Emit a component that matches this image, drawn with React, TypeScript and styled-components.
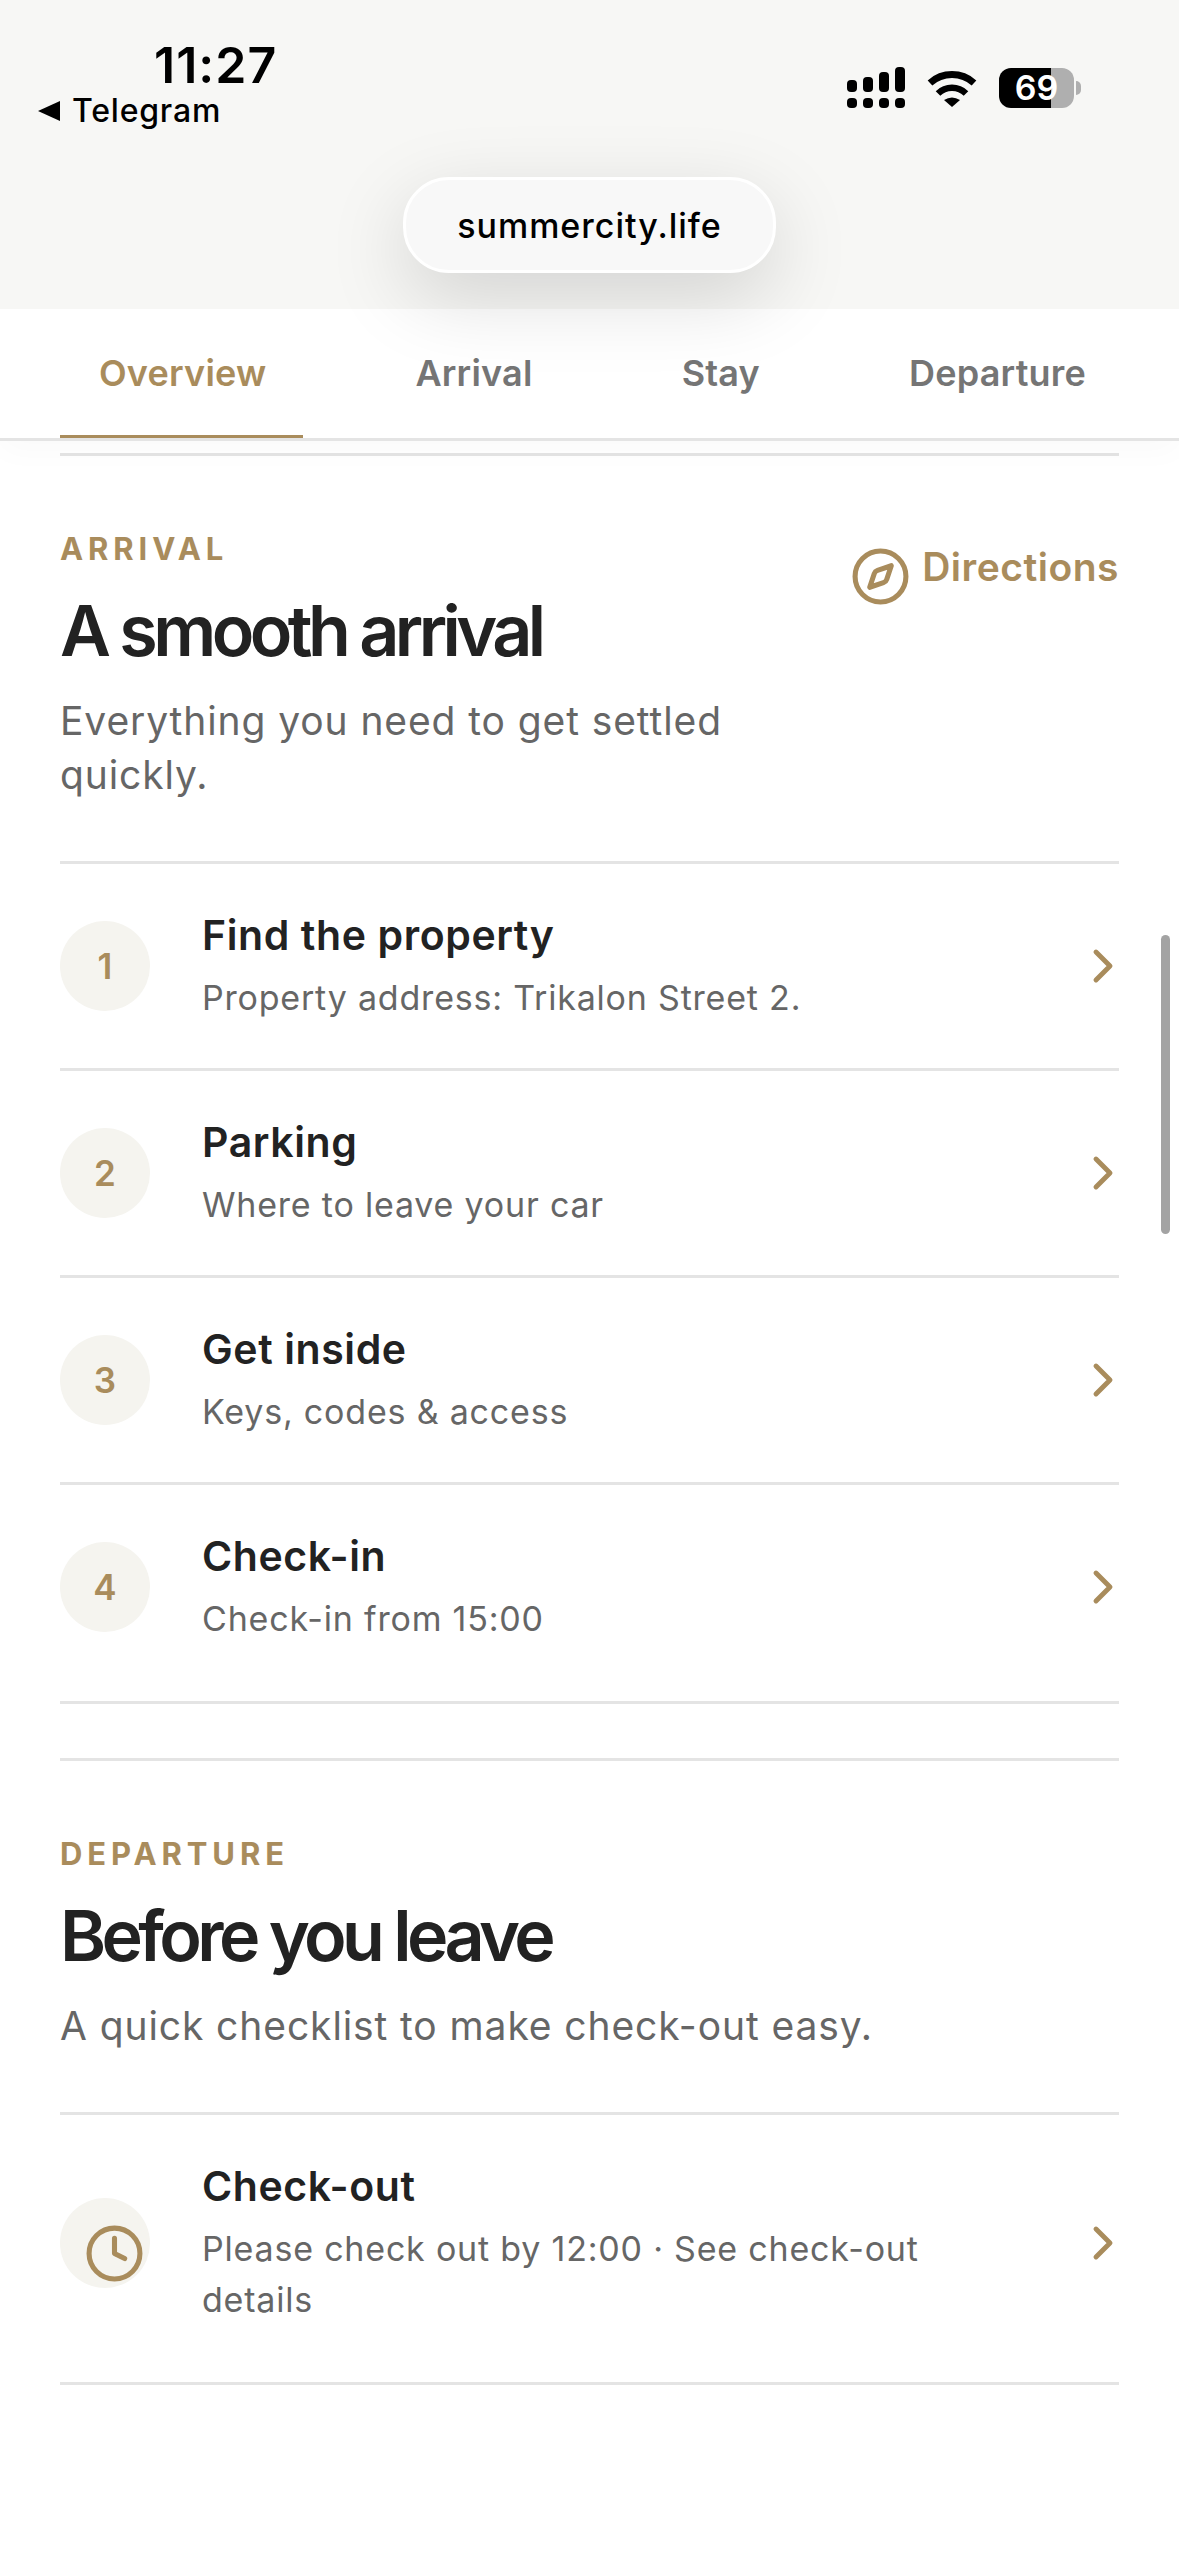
import { ChevronRight, Clock, Compass } from "lucide-react";
import styled, { createGlobalStyle } from "styled-components";

const GOLD = "#a98c5c";
const LINE = "#e4e4e4";

const GlobalStyle = createGlobalStyle`
  html, body {
    margin: 0;
    padding: 0;
    background: #ffffff;
  }
  * {
    box-sizing: border-box;
  }
`;

const Page = styled.div`
  position: relative;
  width: 1179px;
  height: 2556px;
  overflow: hidden;
  background: #ffffff;
  font-family: Inter, "Liberation Sans", sans-serif;
`;

const BrowserChrome = styled.header`
  position: relative;
  z-index: 2;
  height: 309px;
  padding-top: 36px;
  display: flex;
  flex-direction: column;
  align-items: center;
  background: #f7f7f5;
`;

const StatusBar = styled.div`
  width: 100%;
  height: 91px;
  padding: 0 105px 0 38px;
  display: flex;
  justify-content: space-between;
  color: #000000;
`;

const StatusLeft = styled.div`
  display: flex;
  flex-direction: column;
`;

const Time = styled.div`
  margin-left: 116px;
  font-size: 50px;
  line-height: 58px;
  font-weight: 600;
  letter-spacing: 1px;
`;

const BackLink = styled.div`
  margin-top: -2px;
  display: flex;
  align-items: center;
  gap: 12px;
  font-size: 32px;
  line-height: 38px;
  font-weight: 500;
  letter-spacing: 0.8px;
`;

const StatusIcons = styled.div`
  height: 41px;
  margin-top: 31px;
  display: flex;
  align-items: center;
  gap: 22px;
`;

const Battery = styled.div`
  position: relative;
  width: 75px;
  height: 40px;
  border-radius: 12px;
  display: flex;
  align-items: center;
  justify-content: center;
  background: linear-gradient(90deg, #000000 52px, #afafaf 52px);
  color: #ffffff;
  font-size: 34px;
  font-weight: 600;

  &::after {
    content: "";
    position: absolute;
    right: -7px;
    top: 13px;
    width: 5px;
    height: 14px;
    border-radius: 0 6px 6px 0;
    background: #afafaf;
  }
`;

const AddressPill = styled.div`
  margin-top: 50px;
  width: 373px;
  height: 96px;
  display: flex;
  align-items: center;
  justify-content: center;
  border: 3px solid #ffffff;
  border-radius: 46px;
  background: #f8f8f8;
  box-shadow: 0 24px 80px rgba(0, 0, 0, 0.15);
  color: #000000;
  font-size: 34px;
  font-weight: 500;
  letter-spacing: 1px;
`;

const TabBar = styled.nav`
  position: relative;
  z-index: 1;
  display: flex;
  gap: 73px;
  padding-left: 60px;
  background: #ffffff;
  border-bottom: 3px solid ${LINE};
  box-shadow: 0 10px 30px rgba(0, 0, 0, 0.025);
`;

const Tab = styled.div<{ $active?: boolean }>`
  padding: 42px 37px 40px 39px;
  font-size: 36px;
  line-height: 44px;
  font-weight: 600;
  letter-spacing: 0.2px;
  white-space: nowrap;
  color: ${(props) => (props.$active ? GOLD : "#757575")};
  border-bottom: 3px solid ${(props) => (props.$active ? GOLD : "transparent")};
  border-radius: 3px 3px 0 0;
`;

const Content = styled.main`
  padding: 12px 60px 0;
`;

const Section = styled.section`
  padding-top: 75px;
  border-top: 3px solid ${LINE};
  margin-bottom: 54px;
`;

const SectionHead = styled.div`
  display: flex;
  justify-content: space-between;
  align-items: flex-start;
  gap: 24px;
`;

const HeadText = styled.div`
  flex: 1;
`;

const Eyebrow = styled.div`
  font-size: 31px;
  line-height: 36px;
  font-weight: 700;
  letter-spacing: 4.9px;
  color: ${GOLD};
`;

const Heading = styled.h2`
  margin: 24px 0 23px;
  font-size: 70px;
  line-height: 80px;
  font-weight: 600;
  letter-spacing: -4.6px;
  color: #222222;
`;

const Lead = styled.p`
  margin: 0;
  font-size: 39px;
  line-height: 54px;
  font-weight: 400;
  letter-spacing: 0.9px;
  color: #666666;
`;

const DirectionsLink = styled.div`
  margin-top: 11px;
  display: flex;
  align-items: flex-start;
  gap: 11px;
  font-size: 39px;
  line-height: 50px;
  font-weight: 600;
  letter-spacing: 0.5px;
  color: ${GOLD};

  svg {
    margin-top: 4px;
  }
`;

const StepList = styled.div`
  margin-top: 59px;
  padding-bottom: 12px;
  border-top: 3px solid ${LINE};
  border-bottom: 3px solid ${LINE};
`;

const StepRow = styled.div`
  display: flex;
  align-items: center;
  padding: 45.5px 0;
  border-bottom: 3px solid ${LINE};

  &:last-child {
    border-bottom: none;
  }
`;

const Badge = styled.div`
  position: relative;
  flex: none;
  width: 90px;
  height: 90px;
  border-radius: 50%;
  display: flex;
  align-items: center;
  justify-content: center;
  background: #f5f4ef;
  color: ${GOLD};
  font-size: 35px;
  font-weight: 600;
`;

const BadgeIcon = styled.span`
  position: absolute;
  left: 24px;
  top: 25px;
  display: block;
  width: 61px;
  height: 61px;
`;

const StepText = styled.div`
  flex: 1;
  margin-left: 52px;
  padding-right: 120px;
`;

const StepTitle = styled.div`
  font-size: 41px;
  line-height: 50px;
  font-weight: 600;
  letter-spacing: 0.6px;
  color: #222222;
`;

const StepNote = styled.div`
  margin-top: 12px;
  font-size: 34px;
  line-height: 51px;
  letter-spacing: 0.8px;
  color: #666666;
`;

const ArrowSlot = styled.div`
  flex: none;
  width: 32px;
  display: flex;
  justify-content: center;
  color: ${GOLD};

  svg {
    flex: none;
    margin: 0 -12px;
  }
`;

const Scrollbar = styled.div`
  position: absolute;
  z-index: 3;
  left: 1161px;
  top: 935px;
  width: 9px;
  height: 299px;
  border-radius: 5px;
  background: #a3a3a3;
`;

const signalBars = [13, 10, 5, 0];

function SignalIcon() {
  return (
    <svg width="58" height="41" viewBox="0 0 58 41" fill="#000">
      {signalBars.map((top, i) => (
        <g key={top}>
          <rect x={i * 16} y={top} width="10" height={25 - top} rx="4" />
          <rect x={i * 16} y="31" width="10" height="10" rx="4" />
        </g>
      ))}
    </svg>
  );
}

function WifiIcon() {
  return (
    <svg width="50" height="38" viewBox="0 0 50 38">
      <path d="M3 14A33 33 0 0 1 47 14" fill="none" stroke="#000" strokeWidth="7" />
      <path d="M11 24.5A20 20 0 0 1 39 24.5" fill="none" stroke="#000" strokeWidth="6.5" />
      <path d="M17 31Q25 26 33 31L25 38Z" fill="#000" />
    </svg>
  );
}

function BackArrow() {
  return (
    <svg width="22" height="20" viewBox="0 0 22 20">
      <path d="M22 0V20L0 10Z" fill="#000" />
    </svg>
  );
}

const arrivalSteps = [
  { id: 1, title: "Find the property", note: "Property address: Trikalon Street 2." },
  { id: 2, title: "Parking", note: "Where to leave your car" },
  { id: 3, title: "Get inside", note: "Keys, codes & access" },
  { id: 4, title: "Check-in", note: "Check-in from 15:00" },
];

export default function App() {
  return (
    <Page>
      <GlobalStyle />
      <BrowserChrome>
        <StatusBar>
          <StatusLeft>
            <Time>11:27</Time>
            <BackLink>
              <BackArrow />
              Telegram
            </BackLink>
          </StatusLeft>
          <StatusIcons>
            <SignalIcon />
            <WifiIcon />
            <Battery>69</Battery>
          </StatusIcons>
        </StatusBar>
        <AddressPill>summercity.life</AddressPill>
      </BrowserChrome>

      <TabBar>
        <Tab $active>Overview</Tab>
        <Tab>Arrival</Tab>
        <Tab>Stay</Tab>
        <Tab>Departure</Tab>
      </TabBar>

      <Content>
        <Section>
          <SectionHead>
            <HeadText>
              <Eyebrow>ARRIVAL</Eyebrow>
              <Heading>A smooth arrival</Heading>
              <Lead>Everything you need to get settled quickly.</Lead>
            </HeadText>
            <DirectionsLink>
              <Compass size={61} strokeWidth={2} />
              Directions
            </DirectionsLink>
          </SectionHead>
          <StepList>
            {arrivalSteps.map((step) => (
              <StepRow key={step.id}>
                <Badge>{step.id}</Badge>
                <StepText>
                  <StepTitle>{step.title}</StepTitle>
                  <StepNote>{step.note}</StepNote>
                </StepText>
                <ArrowSlot>
                  <ChevronRight size={56} strokeWidth={2.1} />
                </ArrowSlot>
              </StepRow>
            ))}
          </StepList>
        </Section>

        <Section>
          <Eyebrow>DEPARTURE</Eyebrow>
          <Heading>Before you leave</Heading>
          <Lead>A quick checklist to make check-out easy.</Lead>
          <StepList>
            <StepRow>
              <Badge>
                <BadgeIcon>
                  <Clock size={61} strokeWidth={2} />
                </BadgeIcon>
              </Badge>
              <StepText>
                <StepTitle>Check-out</StepTitle>
                <StepNote>Please check out by 12:00 · See check-out details</StepNote>
              </StepText>
              <ArrowSlot>
                <ChevronRight size={56} strokeWidth={2.1} />
              </ArrowSlot>
            </StepRow>
          </StepList>
        </Section>
      </Content>
      <Scrollbar />
    </Page>
  );
}
